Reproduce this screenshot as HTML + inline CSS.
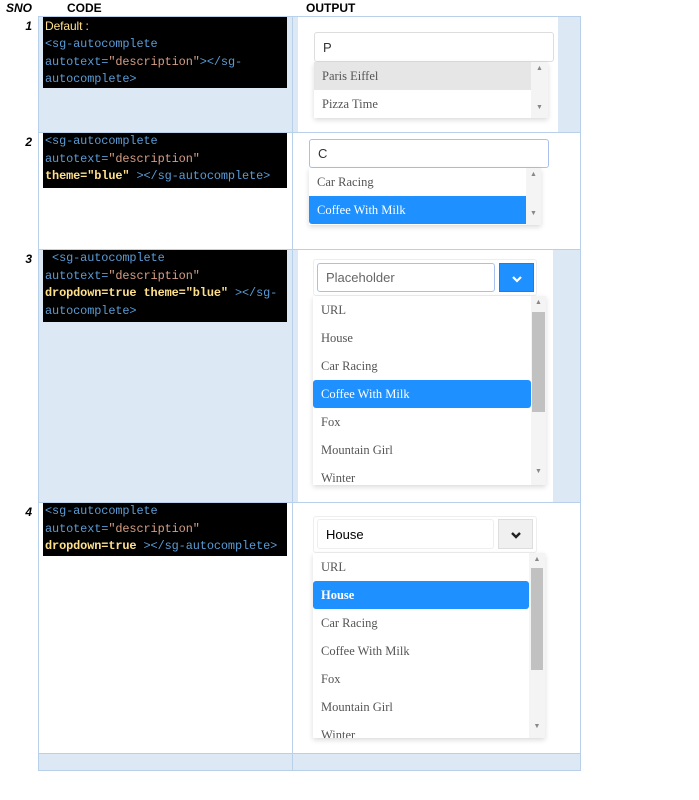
<!DOCTYPE html>
<html><head><meta charset="utf-8"><style>
*{box-sizing:border-box;margin:0;padding:0}
body{width:699px;height:800px;background:#fff;position:relative;font-family:"Liberation Sans",sans-serif;overflow:hidden}
.a{position:absolute}
.hd{font-weight:bold;font-size:12px;color:#000;top:1px}
.num{font-style:italic;font-weight:bold;font-size:12px;width:32px;text-align:right;left:0}
.code{background:#000;font-family:"Liberation Mono",monospace;font-size:11.9px;line-height:17.5px;color:#5a9bd5;padding:0 2px;left:43px;width:244px;letter-spacing:-0.1px}
.y{color:#ffe08a}.s{color:#d69d85}.w{color:#ddd}
.inp{border:1px solid #ddd;border-radius:3px;background:#fff;font-size:13px;color:#333;padding-left:8px;display:flex;align-items:center}
.list{background:#fff;box-shadow:0 2px 5px rgba(0,0,0,.15);overflow:hidden}
.it{height:28px;line-height:28px;font-family:"Liberation Serif",serif;font-size:12.5px;color:#555;padding-left:8px}
.sel{background:#1e90ff;color:#fff;border-radius:3px}
.sb{background:#f4f4f4}
.th{background:#c1c1c1}
.ar{font-size:7px;color:#888;text-align:center;width:100%}
</style></head><body>
<div class="a hd" style="left:6px;font-style:italic">SNO</div>
<div class="a hd" style="left:67px">CODE</div>
<div class="a hd" style="left:306px">OUTPUT</div>
<div class="a" style="left:38px;top:16px;width:543px;height:755px;border:1px solid #b8d0ea"></div>
<div class="a" style="left:39px;top:17px;width:541px;height:115px;background:#dde8f5"></div>
<div class="a" style="left:298px;top:17px;width:260px;height:115px;background:#fff"></div>
<div class="a" style="left:39px;top:250px;width:541px;height:252px;background:#dde8f5"></div>
<div class="a" style="left:298px;top:250px;width:255px;height:252px;background:#fff"></div>
<div class="a" style="left:39px;top:754px;width:541px;height:16px;background:#dde8f5"></div>
<div class="a" style="left:38px;top:132px;width:543px;height:1px;background:#b8d0ea"></div>
<div class="a" style="left:38px;top:249px;width:543px;height:1px;background:#b8d0ea"></div>
<div class="a" style="left:38px;top:502px;width:543px;height:1px;background:#b8d0ea"></div>
<div class="a" style="left:38px;top:753px;width:543px;height:1px;background:#b8d0ea"></div>
<div class="a" style="left:292px;top:16px;width:1px;height:755px;background:#b8d0ea"></div>

<div class="a num" style="top:19px">1</div>
<div class="a num" style="top:135px">2</div>
<div class="a num" style="top:252px">3</div>
<div class="a num" style="top:505px">4</div>

<div class="a code" style="top:17px;height:71px;font-family:'Liberation Sans',sans-serif;line-height:18px"><span class="y" style="font-size:12px">Default :</span></div>
<div class="a code" style="top:36px;background:transparent">&lt;sg-autocomplete<br>autotext=<span class="s">"description"</span>&gt;&lt;/sg-<br>autocomplete&gt;</div>
<div class="a code" style="top:133px;height:55px">&lt;sg-autocomplete<br>autotext=<span class="s">"description"</span><br><span class="y"><b>theme="blue"</b></span> &gt;&lt;/sg-autocomplete&gt;</div>
<div class="a code" style="top:250px;height:72px">&nbsp;&lt;sg-autocomplete<br>autotext=<span class="s">"description"</span><br><span class="y"><b>dropdown=true theme="blue"</b></span> &gt;&lt;/sg-<br>autocomplete&gt;</div>
<div class="a code" style="top:503px;height:53px">&lt;sg-autocomplete<br>autotext=<span class="s">"description"</span><br><span class="y"><b>dropdown=true</b></span> &gt;&lt;/sg-autocomplete&gt;</div>

<div class="a inp" style="left:314px;top:32px;width:240px;height:30px">P</div>
<div class="a list" style="left:314px;top:62px;width:234px;height:56px">
<div class="it" style="background:#e6e6e6;width:217px">Paris Eiffel</div><div class="it">Pizza Time</div>
<div class="a sb" style="left:217px;top:0;width:17px;height:56px"><div class="ar" style="margin-top:3px">▲</div><div class="ar" style="margin-top:32px">▼</div></div>
</div>
<div class="a inp" style="left:309px;top:139px;width:240px;height:29px;border-color:#a9bff0">C</div>
<div class="a list" style="left:309px;top:168px;width:232px;height:57px">
<div class="it">Car Racing</div><div class="it sel" style="width:217px;border-radius:0 0 0 3px">Coffee With Milk</div>
<div class="a sb" style="left:217px;top:0;width:15px;height:57px"><div class="ar" style="margin-top:3px">▲</div><div class="ar" style="margin-top:32px">▼</div></div>
</div>
<div class="a" style="left:313px;top:259px;width:224px;height:37px;border:1px solid #eee;border-radius:3px"></div>
<div class="a inp" style="left:317px;top:263px;width:178px;height:29px;border-color:#a9bff0;color:#666">Placeholder</div>
<div class="a" style="left:499px;top:263px;width:35px;height:29px;background:#1e90ff;border:1px solid #1a7fe0"><svg width="35" height="29"><path d="M13 13l4 4 4-4" stroke="#fff" stroke-width="2.2" fill="none"/></svg></div>
<div class="a list" style="left:313px;top:296px;width:233px;height:189px">
<div class="it">URL</div><div class="it">House</div><div class="it">Car Racing</div><div class="it sel" style="width:218px">Coffee With Milk</div><div class="it">Fox</div><div class="it">Mountain Girl</div><div class="it">Winter</div>
<div class="a sb" style="left:218px;top:0;width:15px;height:189px"><div class="ar" style="margin-top:3px">▲</div><div class="th" style="position:absolute;left:1px;top:16px;width:13px;height:100px"></div><div class="ar" style="position:absolute;top:172px">▼</div></div>
</div>
<div class="a" style="left:313px;top:516px;width:224px;height:37px;border:1px solid #eee;border-radius:3px"></div>
<div class="a inp" style="left:317px;top:519px;width:177px;height:30px;border-color:#eee;color:#000">House</div>
<div class="a" style="left:498px;top:519px;width:35px;height:30px;background:#f0f0f0;border:1px solid #ddd"><svg width="35" height="30"><path d="M13 13l4 4 4-4" stroke="#222" stroke-width="2.4" fill="none"/></svg></div>
<div class="a list" style="left:313px;top:553px;width:232px;height:185px">
<div class="it">URL</div><div class="it sel" style="width:216px;font-weight:bold">House</div><div class="it">Car Racing</div><div class="it">Coffee With Milk</div><div class="it">Fox</div><div class="it">Mountain Girl</div><div class="it">Winter</div>
<div class="a sb" style="left:216px;top:0;width:16px;height:185px"><div class="ar" style="margin-top:3px">▲</div><div class="th" style="position:absolute;left:2px;top:15px;width:12px;height:102px"></div><div class="ar" style="position:absolute;top:170px">▼</div></div>
</div>
</body></html>
